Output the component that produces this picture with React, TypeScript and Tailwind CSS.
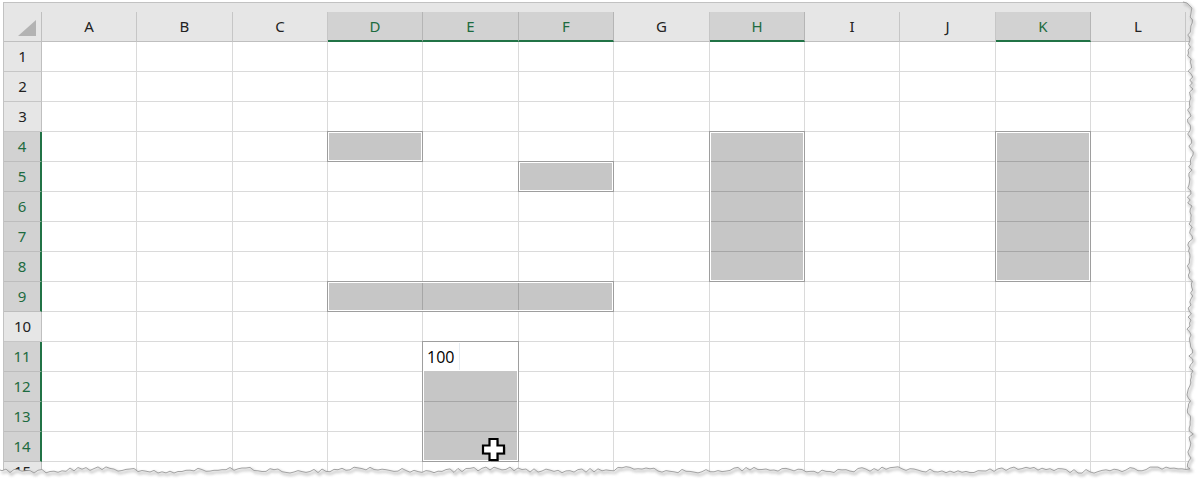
import React from "react";

const COLS: { l: string; w: string; sel: boolean }[] = [
  { l: "A", w: "w-[95px]", sel: false },
  { l: "B", w: "w-[96px]", sel: false },
  { l: "C", w: "w-[95px]", sel: false },
  { l: "D", w: "w-[95px]", sel: true },
  { l: "E", w: "w-[96px]", sel: true },
  { l: "F", w: "w-[95px]", sel: true },
  { l: "G", w: "w-[96px]", sel: false },
  { l: "H", w: "w-[95px]", sel: true },
  { l: "I", w: "w-[95px]", sel: false },
  { l: "J", w: "w-[96px]", sel: false },
  { l: "K", w: "w-[95px]", sel: true },
  { l: "L", w: "w-[95px]", sel: false },
  { l: "", w: "w-[95px]", sel: false },
];

const SEL_ROWS = new Set([4, 5, 6, 7, 8, 9, 11, 12, 13, 14]);
const ROWS = Array.from({ length: 15 }, (_, i) => i + 1);

function rnd(i: number) {
  const x = Math.sin(i * 12.9898 + 78.233) * 43758.5453;
  return x - Math.floor(x);
}

function TornEdge() {
  const pts: [number, number][] = [[1183, 2], [1187, 3]];
  let i = 0;
  for (let y = 5; y <= 468; y += 3) {
    pts.push([1190 + (rnd(i++) - 0.5) * 4.5 + Math.sin(y / 11) * 1.2, y]);
  }
  for (let x = 1190; x >= 0; x -= 4) {
    pts.push([x, 470 + (rnd(i++ + 300) - 0.5) * 4 + Math.sin(x / 21) * 1.4]);
  }
  pts.push([0, 470]);
  const line = pts.map((p, k) => (k === 0 ? "M" : "L") + p[0].toFixed(1) + "," + p[1].toFixed(1)).join(" ");
  const fill = "M1183,0 " + pts.map((p) => "L" + p[0].toFixed(1) + "," + p[1].toFixed(1)).join(" ") + " L0,480 L1200,480 L1200,0 Z";
  return (
    <svg className="absolute left-0 top-0 pointer-events-none" width="1200" height="480" viewBox="0 0 1200 480">
      <defs>
        <filter id="blur" x="-5%" y="-5%" width="110%" height="110%">
          <feGaussianBlur stdDeviation="1.4" />
        </filter>
      </defs>
      <path d={fill} fill="#ffffff" />
      <path d={line} fill="none" stroke="#6e6e6e" strokeWidth="1.6" opacity="0.55" filter="url(#blur)" transform="translate(1.5,2)" />
      <path d={line} fill="none" stroke="#9a9a9a" strokeWidth="0.9" />
    </svg>
  );
}

function Cursor() {
  return (
    <svg className="absolute left-[481px] top-[437px] pointer-events-none" width="27" height="27" viewBox="0 0 27 27">
      <polygon
        points="8.5,2 16.5,2 16.5,8.5 23,8.5 23,16.5 16.5,16.5 16.5,23 8.5,23 8.5,16.5 2,16.5 2,8.5 8.5,8.5"
        fill="#000"
        opacity="0.25"
        transform="translate(1.5,1.5)"
      />
      <polygon
        points="8.5,2 16.5,2 16.5,8.5 23,8.5 23,16.5 16.5,16.5 16.5,23 8.5,23 8.5,16.5 2,16.5 2,8.5 8.5,8.5"
        fill="#ffffff"
        stroke="#000000"
        strokeWidth="2.2"
        strokeLinejoin="miter"
      />
    </svg>
  );
}

export default function App() {
  return (
    <div
      className="relative w-[1200px] h-[480px] bg-white overflow-hidden pt-[2px] pl-[3px]"
      style={{ fontFamily: '"Noto Sans", "Open Sans", sans-serif' }}
    >
      <div className="border-l border-t border-[#c2c2c2] w-[1220px]">
        {/* header row */}
        <div className="flex bg-[#e6e6e6] h-[39px]">
          <div className="w-[38px] shrink-0 flex flex-col">
            <div className="h-[9px]" />
            <div className="h-[30px] relative border-r border-b border-[#bfbfbf]">
              <svg className="absolute left-[13px] top-[7px]" width="20" height="18" viewBox="0 0 20 18">
                <polygon points="1,17 19,1 19,17" fill="#b3b3b3" />
              </svg>
            </div>
          </div>
          {COLS.map((c, k) => (
            <div key={k} className={c.w + " shrink-0 flex flex-col"}>
              <div className="h-[9px]" />
              <div
                className={
                  c.sel
                    ? "h-[30px] flex items-center justify-center border-r border-r-[#b5b5b5] border-b-2 border-b-[#217346] bg-[#d2d2d2] text-[#1d6b40] text-[15px]"
                    : "h-[30px] flex items-center justify-center border-r border-r-[#c6c6c6] border-b border-b-[#bfbfbf] text-[#222222] text-[15px]"
                }
              >
                {c.l}
              </div>
            </div>
          ))}
        </div>
        {/* body rows */}
        {ROWS.map((r) => {
          const sel = SEL_ROWS.has(r);
          return (
            <div key={r} className="flex h-[30px]">
              <div
                className={
                  sel
                    ? "w-[38px] shrink-0 h-[30px] flex items-center justify-center border-b border-b-[#bdbdbd] border-r-2 border-r-[#217346] bg-[#d2d2d2] text-[#1d6b40] text-[15px]"
                    : "w-[38px] shrink-0 h-[30px] flex items-center justify-center border-b border-b-[#c6c6c6] border-r border-r-[#bfbfbf] bg-[#e6e6e6] text-[#222222] text-[15px]"
                }
              >
                {r === 15 ? <span className="-mt-[10px]">{r}</span> : r}
              </div>
              {COLS.map((c, k) => (
                <div key={k} className={c.w + " shrink-0 h-[30px] border-r border-b border-[#dadada]"} />
              ))}
            </div>
          );
        })}
      </div>

      {/* selection overlays */}
      <div className="absolute left-[327px] top-[131px] w-[96px] h-[31px] border border-[#9e9e9e]">
        <div className="h-full border border-white bg-[#c6c6c6]" />
      </div>
      <div className="absolute left-[518px] top-[161px] w-[96px] h-[31px] border border-[#9e9e9e]">
        <div className="h-full border border-white bg-[#c6c6c6]" />
      </div>
      <div className="absolute left-[709px] top-[131px] w-[96px] h-[151px] border border-[#9e9e9e]">
        <div className="h-full border border-white bg-[#c6c6c6] flex flex-col">
          <div className="h-[29px] border-b border-[#a6a6a6]" />
          <div className="h-[30px] border-b border-[#a6a6a6]" />
          <div className="h-[30px] border-b border-[#a6a6a6]" />
          <div className="h-[30px] border-b border-[#a6a6a6]" />
          <div className="h-[28px]" />
        </div>
      </div>
      <div className="absolute left-[995px] top-[131px] w-[96px] h-[151px] border border-[#9e9e9e]">
        <div className="h-full border border-white bg-[#c6c6c6] flex flex-col">
          <div className="h-[29px] border-b border-[#a6a6a6]" />
          <div className="h-[30px] border-b border-[#a6a6a6]" />
          <div className="h-[30px] border-b border-[#a6a6a6]" />
          <div className="h-[30px] border-b border-[#a6a6a6]" />
          <div className="h-[28px]" />
        </div>
      </div>
      <div className="absolute left-[327px] top-[281px] w-[287px] h-[31px] border border-[#9e9e9e]">
        <div className="h-full border border-white bg-[#c6c6c6] flex">
          <div className="w-[94px] border-r border-[#a6a6a6]" />
          <div className="w-[96px] border-r border-[#a6a6a6]" />
          <div className="w-[93px]" />
        </div>
      </div>
      <div className="absolute left-[422px] top-[341px] w-[97px] h-[121px] border border-[#9e9e9e]">
        <div className="h-full border border-white flex flex-col">
          <div
            className="h-[28px] bg-white flex items-center pl-[3px] text-[16px] text-black relative"
            style={{ fontFamily: '"Open Sans", "Noto Sans", sans-serif' }}
          >
            100
            <div className="absolute left-[35px] top-0 h-[27px] w-px bg-[#e6ecf2]" />
          </div>
          <div className="h-[31px] bg-[#c6c6c6] border-b border-[#a6a6a6]" />
          <div className="h-[30px] bg-[#c6c6c6] border-b border-[#a6a6a6]" />
          <div className="h-[28px] bg-[#c6c6c6]" />
        </div>
      </div>

      <Cursor />
      <TornEdge />
    </div>
  );
}
